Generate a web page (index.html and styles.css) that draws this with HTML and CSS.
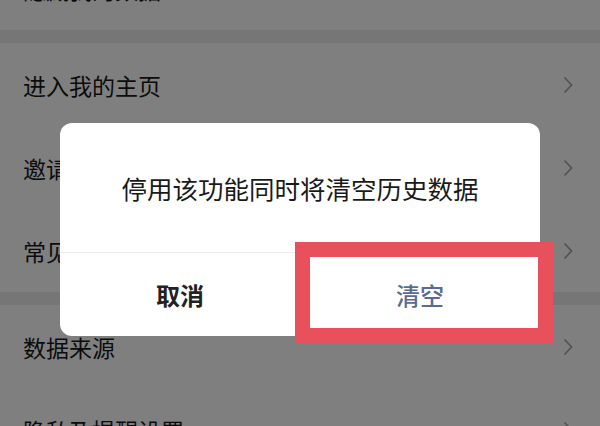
FILE: index.html
```html
<!DOCTYPE html>
<html>
<head>
  <title>设置</title>
  <link rel="stylesheet" href="styles.css">
</head>
<body>

  <div class="page">
    <div class="section">
      <div class="row"><span>隐藏我的数据</span><svg class="arrow" viewBox="0 0 10 18"><path d="M1.5 1.5 L8.5 9 L1.5 16.5"/></svg></div>
    </div>
    <div class="gap"></div>
    <div class="section">
      <div class="row"><span>进入我的主页</span><svg class="arrow" viewBox="0 0 10 18"><path d="M1.5 1.5 L8.5 9 L1.5 16.5"/></svg></div>
      <div class="row"><span>邀请好友</span><svg class="arrow" viewBox="0 0 10 18"><path d="M1.5 1.5 L8.5 9 L1.5 16.5"/></svg></div>
      <div class="row"><span>常见问题</span><svg class="arrow" viewBox="0 0 10 18"><path d="M1.5 1.5 L8.5 9 L1.5 16.5"/></svg></div>
    </div>
    <div class="gap"></div>
    <div class="section">
      <div class="row"><span>数据来源</span><svg class="arrow" viewBox="0 0 10 18"><path d="M1.5 1.5 L8.5 9 L1.5 16.5"/></svg></div>
      <div class="row"><span>隐私及提醒设置</span><svg class="arrow" viewBox="0 0 10 18"><path d="M1.5 1.5 L8.5 9 L1.5 16.5"/></svg></div>
    </div>
  </div>

  <div class="mask">
    <div class="dialog">
      <div class="dialog-text">停用该功能同时将清空历史数据</div>
      <div class="dialog-buttons">
        <div class="btn btn-cancel">取消</div>
        <div class="btn btn-ok">清空</div>
      </div>
      <div class="mark"></div>
    </div>
  </div>

</body>
</html>
```

FILE: styles.css
```css
body {
  font-family: "Noto Sans CJK SC", "Noto Sans", sans-serif;
  background-color: #ededed;
  margin: 0;
  padding: 0;
  width: 600px;
  height: 426px;
  overflow: hidden;
  position: relative;
}

.page {
  margin-top: -53px;
}

.section {
  background-color: #fff;
}

.gap {
  height: 13px;
  background-color: #ededed;
}

.row {
  height: 83px;
  padding: 0 27px 0 23px;
  display: flex;
  align-items: center;
  justify-content: space-between;
  font-size: 23px;
  color: #191919;
}

.arrow {
  width: 10px;
  height: 18px;
  fill: none;
  stroke: #a8a8a8;
  stroke-width: 1.8;
}

.mask {
  position: absolute;
  top: 0;
  left: 0;
  right: 0;
  bottom: 0;
  background-color: rgba(0, 0, 0, 0.5);
  padding: 123px 0 0 60px;
}

.dialog {
  position: relative;
  width: 480px;
  background-color: #fff;
  border-radius: 12px;
}

.dialog-text {
  height: 129px;
  display: flex;
  align-items: center;
  justify-content: center;
  font-size: 25.5px;
  color: #1a1a1a;
  border-bottom: 1px solid #ececec;
}

.dialog-buttons {
  display: flex;
  height: 83px;
}

.btn {
  flex: 1;
  display: flex;
  align-items: center;
  justify-content: center;
  font-size: 24px;
}

.btn-cancel {
  color: #222;
  font-weight: 600;
}

.btn-ok {
  color: #576b95;
  font-weight: 500;
}

.mark {
  position: absolute;
  left: 235px;
  top: 119px;
  width: 258px;
  height: 101px;
  box-sizing: border-box;
  border: 15px solid #e8505b;
}
```
